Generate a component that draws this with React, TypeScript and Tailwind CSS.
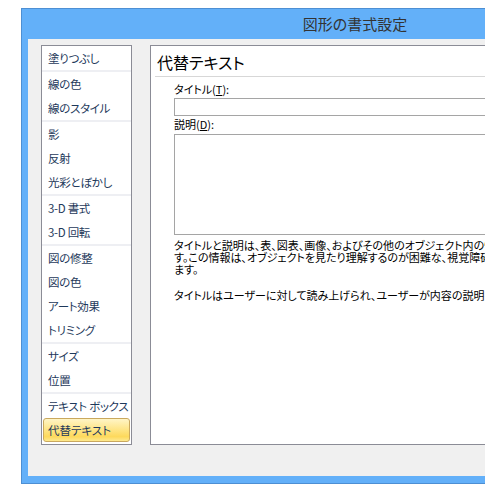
import React from 'react';

const groups: string[][] = [
    ['塗りつぶし'],
    ['線の色', '線のスタイル'],
    ['影', '反射', '光彩とぼかし'],
    ['3-D 書式', '3-D 回転'],
    ['図の修整', '図の色', 'アート効果', 'トリミング'],
    ['サイズ', '位置'],
    ['テキスト ボックス', '代替テキスト'],
];

const selected = '代替テキスト';

function NavList() {
    return (
        <div className="w-[91px] h-[400px] shrink-0 border border-[#8b8c96] bg-white flex flex-col">
            {groups.map((group, gi) => (
                <React.Fragment key={gi}>
                    {gi > 0 && <div className="h-[2px] bg-[#eeeff3]" />}
                    {group.map((item) => (
                        <div key={item} className="h-[24px] px-[1px]">
                            {item === selected ? (
                                <div className="h-[24px] flex items-center pl-[4px] pt-[1px] rounded-[3px] border border-[#c9a85e] bg-[linear-gradient(to_bottom,#fff5c6_0%,#fee68a_45%,#fdd95c_80%,#fde98f_100%)] text-[11.5px] text-[#1e395b] whitespace-nowrap">
                                    {item}
                                </div>
                            ) : (
                                <div className="h-[24px] flex items-center pl-[5px] pt-[2px] text-[11.5px] tracking-[-0.3px] text-[#1e395b] whitespace-nowrap">
                                    {item}
                                </div>
                            )}
                        </div>
                    ))}
                </React.Fragment>
            ))}
        </div>
    );
}

function AltTextPanel() {
    return (
        <div className="w-[510px] h-[400px] shrink-0 border border-[#8b8c96] bg-white pl-[4px] pt-[6px]">
            <div className="h-[20px] pl-[2px] flex items-center text-[16px] text-black leading-none">
                代替テキスト
            </div>
            <div className="mt-[4px] h-px bg-[#d7d7d7]" />
            <div className="pl-[19px] pr-[10px]">
                <div className="mt-[6px] h-[12px] leading-[12px] text-[11px] text-black whitespace-nowrap">
                    タイトル(<span className="underline">T</span>):
                </div>
                <div className="mt-[3px] h-[18px] border border-[#a5a5a5] bg-white" />
                <div className="mt-[2px] h-[12px] leading-[12px] text-[11px] text-black whitespace-nowrap">
                    説明(<span className="underline">D</span>):
                </div>
                <div className="mt-[4px] h-[101px] border border-[#a5a5a5] bg-white" />
                <div className="mt-[4px] text-[11px] leading-[12px] text-black whitespace-nowrap">
                    <div>タイトルと説明は、表、図表、画像、およびその他のオブジェクト内の情報を代替テキストで表したもので</div>
                    <div>す。この情報は、オブジェクトを見たり理解するのが困難な、視覚障碍者や認知障碍者に役立ち</div>
                    <div>ます。</div>
                    <div className="mt-[14px]">タイトルはユーザーに対して読み上げられ、ユーザーが内容の説明を聞くかどうかを選択できます。</div>
                </div>
            </div>
        </div>
    );
}

export default function App() {
    return (
        <div className="w-[485px] h-[495px] overflow-hidden bg-white font-['Noto_Sans_CJK_JP','Noto_Sans',sans-serif] [font-feature-settings:'palt']">
            <div className="ml-[21px] mt-[8px] w-[668px] h-[476px] border border-[#4d8fd3] bg-[#63b0f9] flex flex-col">
                <div className="h-[30px] shrink-0 flex items-center justify-center text-[15px] text-[#333333]">
                    図形の書式設定
                </div>
                <div className="mx-[6px] mb-[7px] flex-1 bg-[#f0f0f0] flex pt-[6px] pl-[13px] gap-[18px]">
                    <NavList />
                    <AltTextPanel />
                </div>
            </div>
        </div>
    );
}
